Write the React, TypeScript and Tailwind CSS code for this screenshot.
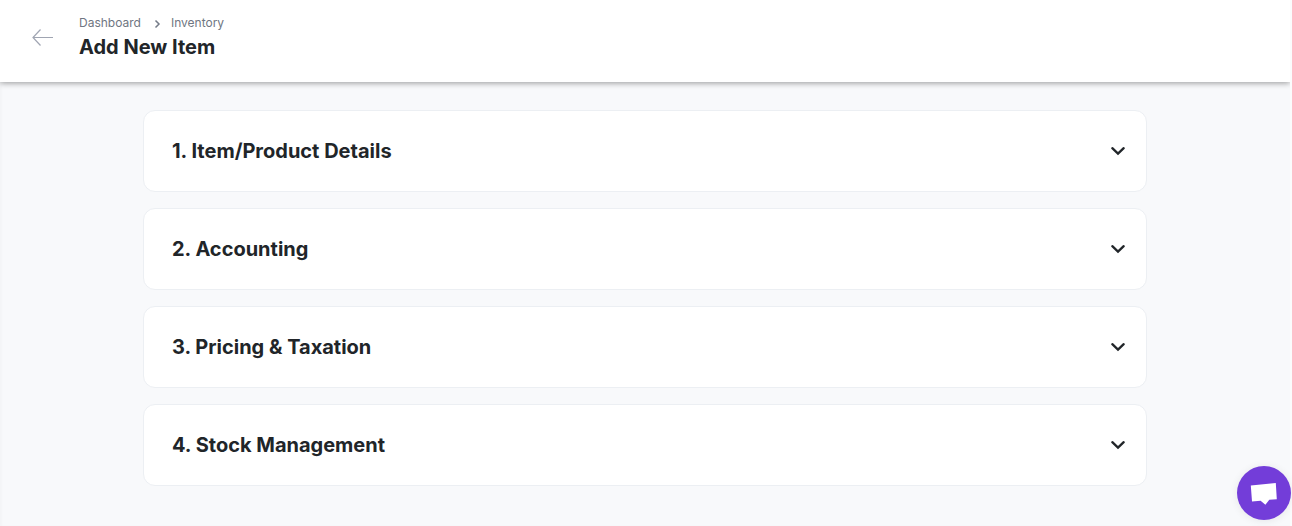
import { useState } from "react";

const sections = [
  { id: "details", title: "1. Item/Product Details" },
  { id: "accounting", title: "2. Accounting" },
  { id: "pricing", title: "3. Pricing & Taxation" },
  { id: "stock", title: "4. Stock Management" },
];

function BackArrow() {
  return (
    <svg width="22" height="18" viewBox="0 0 22 18" fill="none" stroke="#a0a5b2" strokeWidth="1.2" aria-hidden="true">
      <path d="M21 8.5H1M8.5 0.5L1 8.5L8.5 16.5" />
    </svg>
  );
}

function ChevronDown({ open }: { open: boolean }) {
  return (
    <svg
      width="16"
      height="16"
      viewBox="0 0 16 16"
      fill="none"
      stroke="#212529"
      strokeWidth="2.3"
      strokeLinecap="round"
      className={open ? "rotate-180" : ""}
      aria-hidden="true"
    >
      <path d="M2.3 5.2L8 10.7L13.7 5.2" />
    </svg>
  );
}

function Header() {
  return (
    <header className="relative flex items-center bg-white pt-3.5 pb-5 pl-8 shadow-[0_1px_6px_rgba(0,0,0,0.4)]">
      <button type="button" aria-label="Go back" className="cursor-pointer">
        <BackArrow />
      </button>
      <div className="ml-[25px]">
        <nav aria-label="Breadcrumb" className="flex h-[18px] items-center text-xs text-[#6f7682]">
          <a href="#dashboard">Dashboard</a>
          <svg width="8" height="10" viewBox="0 0 8 10" fill="none" className="mr-2.5 ml-3 mt-0.5" aria-hidden="true">
            <path d="M2.5 1.5L6 5L2.5 8.5" stroke="#747b88" strokeWidth="1.5" />
          </svg>
          <a href="#inventory">Inventory</a>
        </nav>
        <h1 className="text-xl leading-[30px] font-bold">Add New Item</h1>
      </div>
    </header>
  );
}

function Section({ id, title }: { id: string; title: string }) {
  const [open, setOpen] = useState(false);

  return (
    <section className="rounded-xl border border-[#eceff3] bg-white">
      <h2>
        <button
          type="button"
          aria-expanded={open}
          aria-controls={id}
          onClick={() => setOpen(!open)}
          className="flex h-20 w-full cursor-pointer items-center justify-between pr-5 pl-7 text-xl font-bold"
        >
          {title}
          <ChevronDown open={open} />
        </button>
      </h2>
      <div id={id} hidden={!open} className="h-10" />
    </section>
  );
}

export default function App() {
  return (
    <div className="min-h-screen bg-[#fbfcfd] pr-0.5 font-['Inter',sans-serif] text-[#212529]">
      <div className="min-h-screen overflow-hidden bg-[#f8f9fb] shadow-[inset_2px_0_2px_rgba(0,0,0,0.02)]">
        <Header />
        <main className="mx-auto flex max-w-[1004px] flex-col gap-4 py-7">
          {sections.map((section) => (
            <Section key={section.id} id={section.id} title={section.title} />
          ))}
        </main>
      </div>

      {/* Chat launcher */}
      <button
        type="button"
        aria-label="Open chat"
        className="fixed right-px bottom-1.5 flex h-[54px] w-[54px] cursor-pointer items-center justify-center rounded-full bg-[#733dd9] shadow-[0_1px_8px_rgba(0,0,0,0.08)]"
      >
        <svg width="54" height="54" viewBox="0 0 54 54" fill="#fff" aria-hidden="true">
          <path d="M13.8 19.6L38.8 17L39.8 33.2L32.3 33.8L28.4 38.8L23.6 34.7L15 35.6Z" />
        </svg>
      </button>
    </div>
  );
}
